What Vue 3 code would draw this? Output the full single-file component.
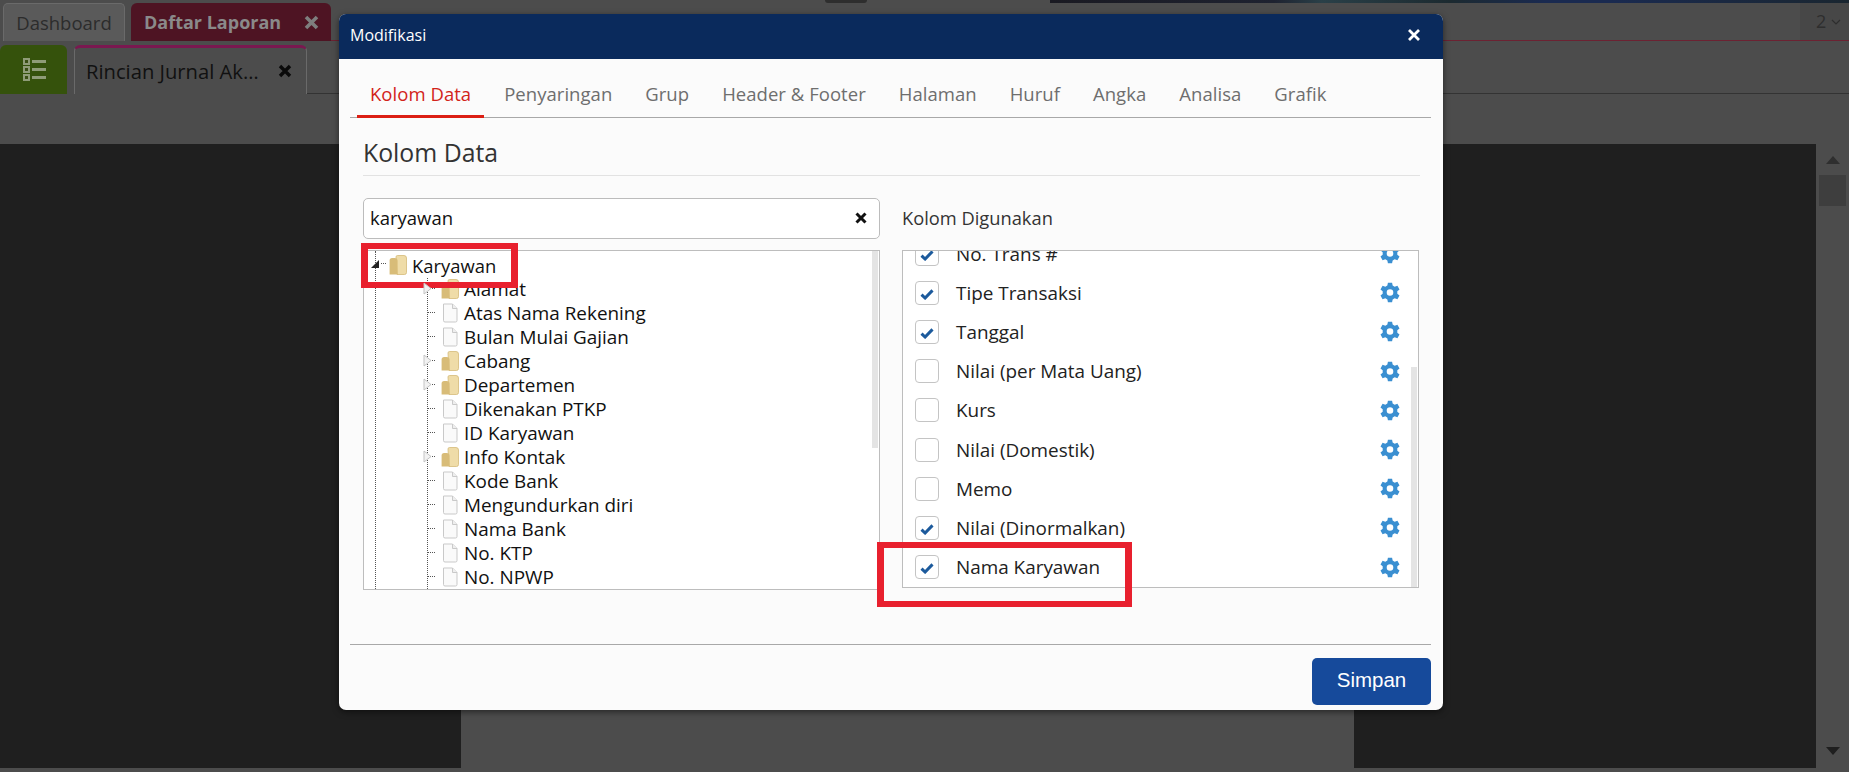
<script setup>
const tabs = ['Kolom Data', 'Penyaringan', 'Grup', 'Header & Footer', 'Halaman', 'Huruf', 'Angka', 'Analisa', 'Grafik']
const treeItems = [
  { name: 'Alamat', folder: true },
  { name: 'Atas Nama Rekening' },
  { name: 'Bulan Mulai Gajian' },
  { name: 'Cabang', folder: true },
  { name: 'Departemen', folder: true },
  { name: 'Dikenakan PTKP' },
  { name: 'ID Karyawan' },
  { name: 'Info Kontak', folder: true },
  { name: 'Kode Bank' },
  { name: 'Mengundurkan diri' },
  { name: 'Nama Bank' },
  { name: 'No. KTP' },
  { name: 'No. NPWP' }
]
const columns = [
  { name: 'No. Trans #', on: true },
  { name: 'Tipe Transaksi', on: true },
  { name: 'Tanggal', on: true },
  { name: 'Nilai (per Mata Uang)', on: false },
  { name: 'Kurs', on: false },
  { name: 'Nilai (Domestik)', on: false },
  { name: 'Memo', on: false },
  { name: 'Nilai (Dinormalkan)', on: true },
  { name: 'Nama Karyawan', on: true }
]
function buildGear() {
  const pt = (r, deg) => {
    const a = (deg * Math.PI) / 180
    return (10 + r * Math.cos(a)).toFixed(2) + ' ' + (10 + r * Math.sin(a)).toFixed(2)
  }
  let d = ''
  for (let i = 0; i < 6; i++) {
    const c = -90 + i * 60
    d += (i === 0 ? 'M' : 'L') + pt(7.4, c - 21) + 'L' + pt(10, c - 12) + 'L' + pt(10, c + 12) + 'L' + pt(7.4, c + 21)
  }
  d += 'Z M10 6.700A3.300 3.300 0 1 0 10 13.300A3.300 3.300 0 1 0 10 6.700Z'
  return d
}
const gear = buildGear()
</script>

<template>
  <div class="page">
    <div class="topstrip">
      <span class="s1"></span><span class="s2"></span>
    </div>
    <div class="tabbar">
      <div class="t-dash">Dashboard</div>
      <div class="t-daftar"><span>Daftar Laporan</span>
        <svg width="15" height="15" viewBox="0 0 15 15"><path d="M2 2l11 11M13 2L2 13" stroke="#7e7e7e" stroke-width="3.600"/></svg>
      </div>
      <div class="t-rest"></div>
      <div class="t-num">2 <svg width="10" height="6" viewBox="0 0 10 6"><path d="M1 1l4 4 4-4" fill="none" stroke="#2e2e2e" stroke-width="1.200"/></svg></div>
    </div>
    <div class="subbar">
      <div class="t-menu">
        <svg width="23" height="23" viewBox="0 0 23 23">
          <g fill="#8f9c78">
            <rect x="0" y="0" width="7" height="7"/><rect x="0" y="8" width="7" height="7"/><rect x="0" y="16" width="7" height="7"/>
            <rect x="9" y="2" width="14" height="3"/><rect x="9" y="10" width="14" height="3"/><rect x="9" y="18" width="14" height="3"/>
          </g>
          <g fill="#3a4f14">
            <rect x="2" y="2" width="3" height="3"/><rect x="2" y="10" width="3" height="3"/><rect x="2" y="18" width="3" height="3"/>
          </g>
        </svg>
      </div>
      <div class="t-rincian"><span>Rincian Jurnal Ak…</span>
        <svg width="14" height="14" viewBox="0 0 14 14"><path d="M2 2l10 10M12 2L2 12" stroke="#0a0a0a" stroke-width="3.400"/></svg>
      </div>
      <div class="sub-rest"></div>
    </div>
    <div class="toolbar"></div>
    <div class="work">
      <div class="dark d-left"></div>
      <div class="sheet"></div>
      <div class="dark d-right"></div>
      <div class="vscroll">
        <i class="up"></i><i class="thumb"></i><i class="grow"></i><i class="down"></i>
      </div>
    </div>
    <div class="footer-strip"></div>

    <div class="modal">
      <div class="m-head"><span>Modifikasi</span>
        <svg width="14" height="14" viewBox="0 0 14 14"><path d="M2 2l10 10M12 2L2 12" stroke="#fff" stroke-width="2.800"/></svg>
      </div>
      <div class="m-body">
        <div class="tabs">
          <div v-for="(t, i) in tabs" :key="t" class="tab" :class="{ active: i === 0 }">{{ t }}</div>
        </div>
        <h2 class="title">Kolom Data</h2>
        <div class="cols">
          <div class="col-left">
            <div class="search">
              <span>karyawan</span>
              <svg class="search-x" width="12" height="12" viewBox="0 0 12 12"><path d="M1.500 1.500l9 9M10.500 1.500l-9 9" stroke="#111" stroke-width="3"/></svg>
            </div>
            <div class="tree">
              <i class="vline v1"></i><i class="vline v2"></i>
              <div class="root-row">
                <i class="root-arrow"></i><i class="root-dash"></i>
                <svg class="folder" width="18" height="20" viewBox="0 0 18 20">
                  <path d="M7 2q0-1.500 1.500-1.500h6.500q2.500 0 2.500 2.500V17.500q0 2-2 2H8z" fill="#efdca8" stroke="#d4ba78" stroke-width=".8"/>
                  <path d="M.6 19.500V5.500q0-2.500 2.500-2.500h2.500q3 0 3 3v13.500z" fill="#d8bc78"/>
                </svg>
                <span>Karyawan</span>
              </div>
              <div v-for="it in treeItems" :key="it.name" class="row">
                <svg v-if="it.folder" class="exp" width="9" height="13" viewBox="0 0 9 13"><path d="M1 1l7 5.500L1 12z" fill="#f2f2f2" stroke="#c4c4c4"/></svg>
                <i class="dash"></i>
                <svg v-if="it.folder" class="folder" width="18" height="20" viewBox="0 0 18 20">
                  <path d="M7 2q0-1.500 1.500-1.500h6.500q2.500 0 2.500 2.500V17.500q0 2-2 2H8z" fill="#efdca8" stroke="#d4ba78" stroke-width=".8"/>
                  <path d="M.6 19.500V8.500q0-2.500 2.500-2.500h2.500q3 0 3 3v10.500z" fill="#d8bc78"/>
                </svg>
                <svg v-else class="folder" width="18" height="20" viewBox="0 0 18 20">
                  <path d="M2.500 1h9l4.500 4.500V17.500q0 1.500-1.500 1.500H4q-1.500 0-1.500-1.500z" fill="#fafafa" stroke="#c9c9c9"/>
                  <path d="M11.500 1v4.500H16" fill="#eee" stroke="#c9c9c9"/>
                </svg>
                <span>{{ it.name }}</span>
              </div>
              <i class="sb sb-tree"></i>
            </div>
          </div>
          <div class="col-right">
            <div class="label">Kolom Digunakan</div>
            <div class="list">
              <div class="list-in">
                <div v-for="c in columns" :key="c.name" class="lrow">
                  <span class="cb">
                    <svg v-if="c.on" width="14" height="11" viewBox="0 0 14 11"><path d="M1.500 5.600l3.600 3.400 7.400-7.600" fill="none" stroke="#1c5a9c" stroke-width="3"/></svg>
                  </span>
                  <span class="lname">{{ c.name }}</span>
                  <svg class="gear" width="20" height="21" viewBox="0 0 20 20"><path :d="gear" fill="#3a8fd1" fill-rule="evenodd"/></svg>
                </div>
              </div>
              <i class="sb sb-list"></i>
            </div>
          </div>
        </div>
        <div class="m-foot"><button class="save">Simpan</button></div>
      </div>
    </div>

    <i class="mark m1"></i>
    <i class="mark m2"></i>
  </div>
</template>

<style>
html, body { margin: 0; background: #4c4c4c; overflow: hidden; }
</style>

<style scoped>
.page { position: relative; width: 1849px; height: 772px; background: #4c4c4c; overflow: hidden; font-family: "Open Sans", "Noto Sans", sans-serif; display: flex; flex-direction: column; }
.topstrip { height: 3px; background: #4c4c4c; display: flex; }
.s1 { margin-left: 825px; width: 42px; background: #2e2e2e; border-radius: 0 0 20px 20px; }
.s2 { margin-left: 183px; flex: 1; background: linear-gradient(90deg, #1a1a22 0, #1e2230 28%, #2a4048 34%, #1c2a30 50%, #1a2a50 62%, #1a2a50 70%, #1a2630 100%); }
.tabbar { height: 38px; display: flex; align-items: stretch; }
.t-dash { margin-left: 3px; width: 122px; box-sizing: border-box; border: 1px solid #6a6a6a; border-bottom: 0; border-radius: 5px 5px 0 0; background: #5a5a5a; color: #2c2c2c; font-size: 18.500px; line-height: 37px; text-align: center; }
.t-daftar { margin-left: 6px; width: 200px; box-sizing: border-box; background: #4e1423; border-radius: 6px 6px 0 0; color: #8a8a8a; font-size: 18px; font-weight: 700; padding: 0 12px 0 13px; display: flex; align-items: center; justify-content: space-between; }
.t-rest { flex: 1; border-bottom: 1px solid #6c2232; }
.t-num { width: 49px; background: #474747; border-bottom: 1px solid #6c2232; box-sizing: border-box; color: #2e2e2e; font-size: 18px; line-height: 37px; padding-left: 16px; }
.t-num svg { vertical-align: 3px; }
.subbar { margin-top: 4px; height: 49px; display: flex; align-items: stretch; }
.t-menu { width: 67px; background: #35520c; border-radius: 6px 6px 0 0; display: flex; align-items: center; justify-content: center; padding-left: 2px; box-sizing: border-box; }
.t-rincian { margin-left: 7px; width: 233px; box-sizing: border-box; background: #4c4c4c; border: 1px solid #6a6a6a; border-top: 3px solid #7a1850; border-radius: 6px 6px 0 0; border-bottom: 0; color: #111; font-size: 20.200px; padding: 0 14px 0 11px; display: flex; align-items: center; justify-content: space-between; }
.sub-rest { flex: 1; border-bottom: 1px solid #333; }
.toolbar { height: 50px; }
.work { flex: 1; display: flex; }
.dark { background: #1f1f1f; }
.d-left { width: 461px; }
.sheet { width: 893px; background: #4c4c4c; }
.d-right { width: 462px; }
.vscroll { width: 33px; display: flex; flex-direction: column; align-items: center; }
.vscroll .up { margin-top: 12px; border: 7px solid transparent; border-top: 0; border-bottom: 8px solid #2f2f2f; }
.vscroll .thumb { margin-top: 11px; width: 27px; height: 31px; background: #3e3e3e; }
.vscroll .grow { flex: 1; }
.vscroll .down { margin-bottom: 13px; border: 7px solid transparent; border-bottom: 0; border-top: 8px solid #1f1f1f; }
.footer-strip { height: 4px; }

.modal { position: absolute; left: 339px; top: 14px; width: 1104px; height: 696px; border-radius: 7px; overflow: hidden; background: #fbfbfb; display: flex; flex-direction: column; box-shadow: 0 2px 6px rgba(0, 0, 0, .5); }
.m-head { height: 45px; flex: none; background: #0a2a5c; color: #fff; font-size: 16px; display: flex; align-items: center; justify-content: space-between; padding: 0 22px 3px 11px; box-sizing: border-box; }
.m-body { flex: 1; display: flex; flex-direction: column; padding: 0 12px 0 11px; color: #333; }
.tabs { height: 59px; flex: none; box-sizing: border-box; display: flex; align-items: flex-end; gap: 7px; border-bottom: 1px solid #a8a8a8; padding-left: 7px; }
.tab { padding: 0 13px; height: 45px; box-sizing: border-box; line-height: 42px; font-size: 18.500px; letter-spacing: .04px; color: #6e6e6e; white-space: nowrap; margin-bottom: -1px; border-bottom: 3px solid transparent; }
.tab.active { color: #d2231a; border-bottom-color: #dc1f14; }
.title { margin: 20px 11px 0 13px; padding: 0 0 7px; height: 30px; font-size: 24.800px; line-height: 28px; font-weight: 400; color: #333; border-bottom: 1px solid #e2e2e2; box-sizing: content-box; }
.cols { display: flex; margin: 22px 0 0 13px; gap: 22px; }
.col-left { width: 517px; }
.col-right { width: 517px; }
.search { height: 41px; box-sizing: border-box; border: 1px solid #bcbcbc; border-radius: 5px; background: #fff; display: flex; align-items: center; justify-content: space-between; padding: 0 12px 3px 6px; font-size: 18.500px; color: #111; }
.search-x { position: relative; top: 1px; }
.tree { position: relative; margin-top: 11px; height: 340px; box-sizing: border-box; border: 1px solid #bdbdbd; background: #fff; overflow: hidden; color: #111; font-size: 18.900px; }
.root-row { height: 24px; margin-top: 2px; padding-left: 25px; display: flex; align-items: center; position: relative; font-size: 18.400px; }
.root-row .folder { margin-right: 5px; }
.row { height: 24px; padding-left: 77px; display: flex; align-items: center; position: relative; white-space: nowrap; }
.row .folder { margin-right: 5px; flex: none; }
.vline { position: absolute; top: 0; bottom: 0; border-left: 1px dotted #555; }
.v1 { left: 11px; }
.v2 { left: 63px; top: 27px; }
.root-arrow { position: absolute; left: 7px; top: 7px; border-left: 8px solid transparent; border-bottom: 8px solid #222; }
.root-dash { position: absolute; left: 17px; top: 10px; width: 5px; border-top: 1px dotted #555; }
.dash { position: absolute; left: 64px; top: 11px; width: 7px; border-top: 1px dotted #555; }
.exp { position: absolute; left: 59px; top: 5px; z-index: 1; }
.sb { position: absolute; width: 6px; background: #e4e4e4; right: 1px; }
.sb-tree { top: 0; height: 197px; }
.label { height: 41px; line-height: 39px; font-size: 18.300px; color: #333; }
.list { position: relative; margin-top: 11px; height: 338px; box-sizing: border-box; border: 1px solid #bdbdbd; background: #fff; overflow: hidden; color: #222; font-size: 18.900px; }
.list-in { margin-top: -17px; }
.lrow { height: 39.200px; display: flex; align-items: center; padding-left: 12px; }
.cb { width: 24px; height: 24px; flex: none; box-sizing: border-box; border: 1px solid #c4c4c4; border-radius: 4px; background: #fff; display: flex; align-items: center; justify-content: center; margin-right: 17px; padding-top: 3px; }
.lname { flex: 1; }
.gear { margin-right: 18px; flex: none; }
.sb-list { top: 116px; bottom: 0; }
.m-foot { margin-top: 54px; flex: 1; border-top: 1px solid #a8a8a8; display: flex; justify-content: flex-end; align-items: flex-start; padding-top: 13px; }
.save { width: 119px; height: 47px; border: 0; border-radius: 5px; background: #164a9b; color: #fff; font: 20.500px "Liberation Sans", Arial, sans-serif; padding: 0 0 3px; }
.mark { position: absolute; box-sizing: border-box; border: solid #e8202e; border-width: 6px 7px; }
.m1 { left: 361px; top: 243px; width: 157px; height: 45px; }
.m2 { left: 877px; top: 542px; width: 255px; height: 65px; }
</style>
